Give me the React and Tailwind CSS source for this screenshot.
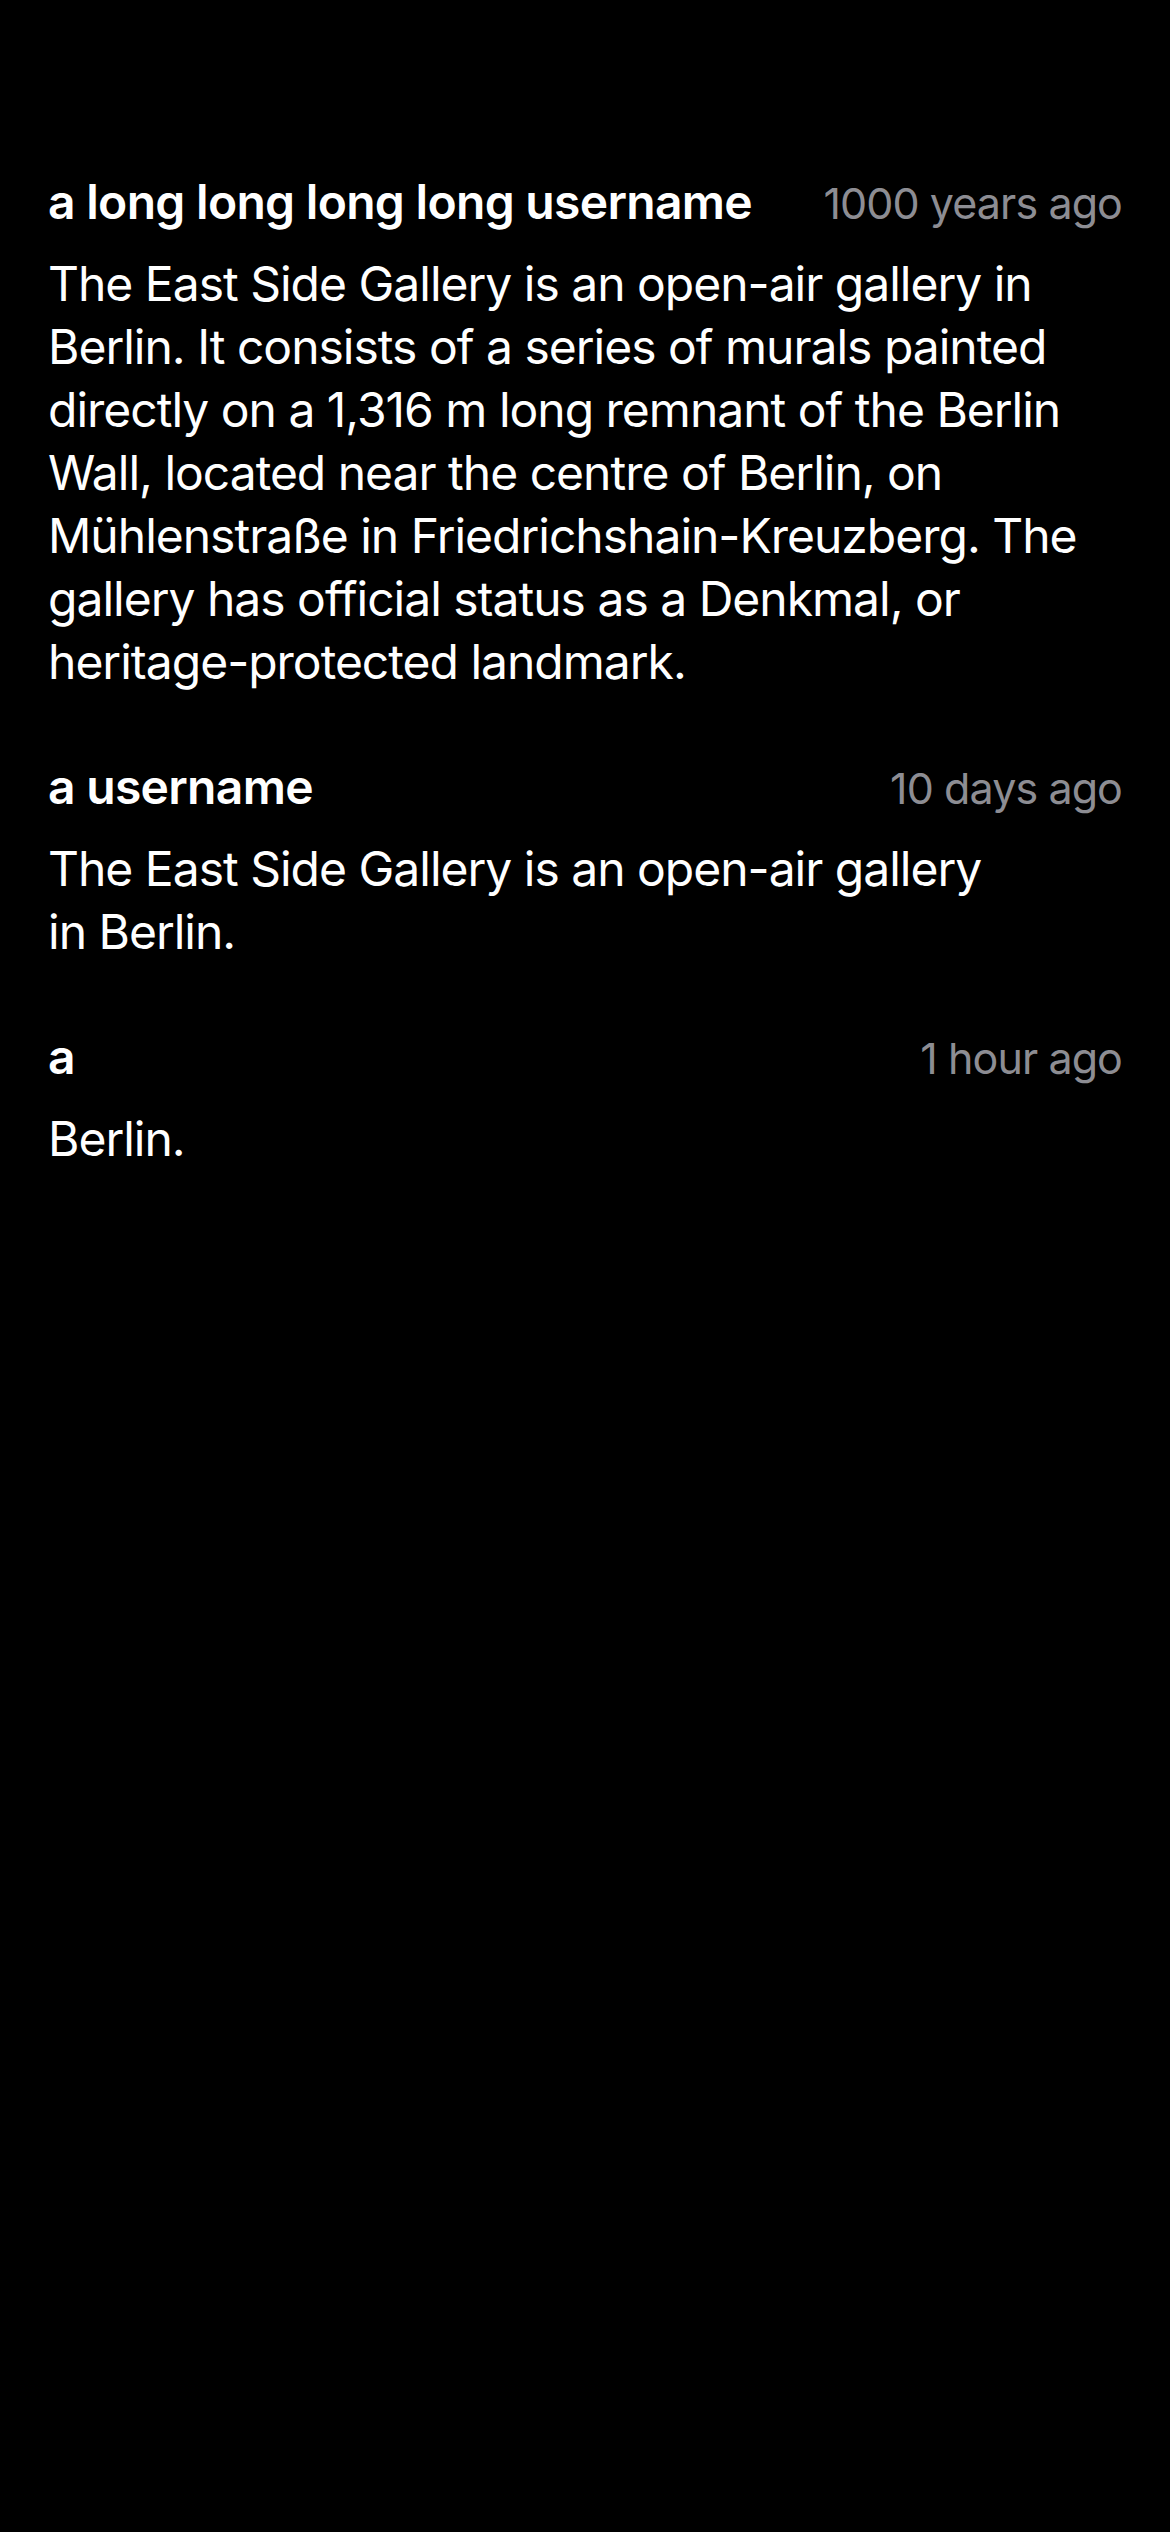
import React from 'react';

const comments = [
  {
    id: 1,
    username: 'a long long long long username',
    time: '1000 years ago',
    lines: [
      'The East Side Gallery is an open-air gallery in',
      'Berlin. It consists of a series of murals painted',
      'directly on a 1,316 m long remnant of the Berlin',
      'Wall, located near the centre of Berlin, on',
      'Mühlenstraße in Friedrichshain-Kreuzberg. The',
      'gallery has official status as a Denkmal, or',
      'heritage-protected landmark.',
    ],
  },
  {
    id: 2,
    username: 'a username',
    time: '10 days ago',
    lines: ['The East Side Gallery is an open-air gallery', 'in Berlin.'],
  },
  {
    id: 3,
    username: 'a',
    time: '1 hour ago',
    lines: ['Berlin.'],
  },
];

const Comment = ({ comment }) => (
  <div className="flex flex-col gap-[17px]">
    <div className="flex items-baseline justify-between gap-6">
      <span className="text-[48px] leading-[63px] font-semibold tracking-[-0.7px] text-white whitespace-nowrap">
        {comment.username}
      </span>
      <span className="text-[43px] leading-[63px] tracking-[-0.9px] text-[#8d8d93] whitespace-nowrap shrink-0">
        {comment.time}
      </span>
    </div>
    <p className="text-[48px] leading-[63px] tracking-[-1px] text-white">
      {comment.lines.map((line, i) => (
        <span key={i} className="block whitespace-nowrap">
          {line}
        </span>
      ))}
    </p>
  </div>
);

export default function App() {
  return (
    <div
      className="min-h-[2532px] w-[1170px] bg-black px-[48px] pt-[170px]"
      style={{ fontFamily: 'Inter, "Noto Sans", sans-serif' }}
    >
      <div className="flex flex-col gap-[62px]">
        {comments.map(c => (
          <Comment key={c.id} comment={c} />
        ))}
      </div>
    </div>
  );
}
